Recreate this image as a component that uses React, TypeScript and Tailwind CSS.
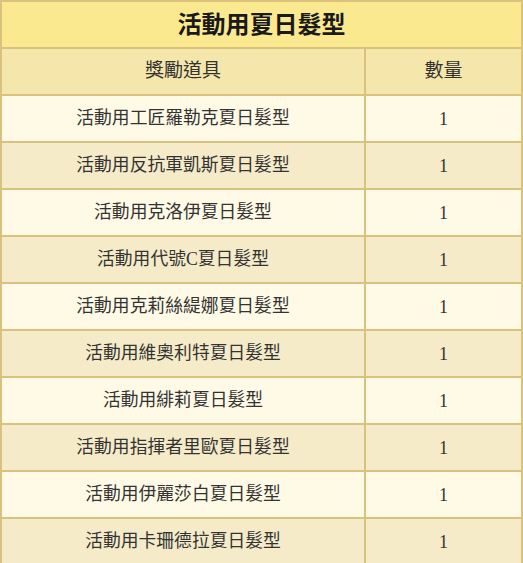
import React from "react";

const items = [
  "活動用工匠羅勒克夏日髮型",
  "活動用反抗軍凱斯夏日髮型",
  "活動用克洛伊夏日髮型",
  "活動用代號C夏日髮型",
  "活動用克莉絲緹娜夏日髮型",
  "活動用維奧利特夏日髮型",
  "活動用緋莉夏日髮型",
  "活動用指揮者里歐夏日髮型",
  "活動用伊麗莎白夏日髮型",
  "活動用卡珊德拉夏日髮型",
];

export default function App() {
  return (
    <div
      className="w-[523px] h-[563px] bg-white"
      style={{ fontFamily: '"Liberation Serif", "Noto Sans CJK TC", serif' }}
    >
      <table className="w-full border-collapse border-2 border-[#d8c27e] table-fixed">
        <colgroup>
          <col className="w-[364px]" />
          <col />
        </colgroup>
        <thead>
          <tr className="h-[47px] bg-[#fbe98f]">
            <th
              colSpan={2}
              className="border-2 border-[#d8c27e] text-[24px] font-bold text-[#1a1a1a] text-center align-middle"
            >
              活動用夏日髮型
            </th>
          </tr>
          <tr className="h-[47px] bg-[#f5e6ab]">
            <th className="border-2 border-[#d8c27e] text-[19px] font-normal text-[#333] text-center align-middle">
              獎勵道具
            </th>
            <th className="border-2 border-[#d8c27e] text-[19px] font-normal text-[#333] text-center align-middle">
              數量
            </th>
          </tr>
        </thead>
        <tbody>
          {items.map((name, i) => (
            <tr
              key={name}
              className={
                i % 2 === 0
                  ? "h-[47px] bg-[#fffae6]"
                  : "h-[47px] bg-[#f5ebc8]"
              }
            >
              <td className="border-2 border-[#d8c27e] text-[17.8px] text-[#333] text-center align-middle">
                {name}
              </td>
              <td className="border-2 border-[#d8c27e] text-[18px] text-[#333] text-center align-middle pt-[2px]">
                1
              </td>
            </tr>
          ))}
        </tbody>
      </table>
    </div>
  );
}
